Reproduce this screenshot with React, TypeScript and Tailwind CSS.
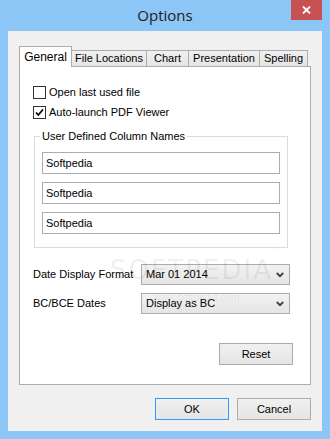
import React from 'react';

const ui = { fontFamily: '"Liberation Sans", Arial, sans-serif' };

const Checkbox: React.FC<{ checked?: boolean; label: string }> = ({ checked, label }) => (
  <div className="flex items-center h-[13px] gap-[3px]">
    <div className="w-[13px] h-[13px] border border-[#333333] bg-white flex items-center justify-center shrink-0">
      {checked && (
        <svg width="9" height="9" viewBox="0 0 9 9">
          <path d="M1 4.5 L3.3 7 L8 1.5" fill="none" stroke="#000" strokeWidth="1.8" />
        </svg>
      )}
    </div>
    <span className="text-[11px] text-black leading-none">{label}</span>
  </div>
);

const TextBox: React.FC<{ value: string }> = ({ value }) => (
  <div className="h-[22px] border border-[#abadb3] bg-white flex items-center pl-[3px] text-[11px] text-black">
    {value}
  </div>
);

const Select: React.FC<{ value: string }> = ({ value }) => (
  <div className="w-[149px] h-[21px] border border-[#acacac] bg-gradient-to-b from-[#f2f2f2] to-[#e5e5e5] flex items-center justify-between pl-[4px] pr-[5px] text-[11px] text-black">
    <span>{value}</span>
    <svg width="8" height="6" viewBox="0 0 8 6">
      <path d="M0.8 1 L4 4.2 L7.2 1" fill="none" stroke="#404040" strokeWidth="1.8" />
    </svg>
  </div>
);

const Button: React.FC<{ label: string; primary?: boolean }> = ({ label, primary }) => (
  <div
    className={`w-[74px] h-[22px] border flex items-center justify-center text-[11px] text-black bg-gradient-to-b from-[#f0f0f0] to-[#e5e5e5] ${
      primary ? 'border-[#3399ff]' : 'border-[#acacac]'
    }`}
  >
    {label}
  </div>
);

const tabs = [
  { label: 'File Locations', w: 'w-[75px]' },
  { label: 'Chart', w: 'w-[42px]' },
  { label: 'Presentation', w: 'w-[71px]' },
  { label: 'Spelling', w: 'w-[48px]' },
];

export default function App() {
  return (
    <div className="w-[330px] h-[439px] bg-[#8cc6f6] flex flex-col overflow-hidden" style={ui}>
      {/* title bar */}
      <div className="relative h-[31px] shrink-0 flex items-center justify-center">
        <span className="text-[15px] text-[#202020] mt-[-1px]" style={{ fontFamily: '"Open Sans", "Noto Sans", sans-serif' }}>
          Options
        </span>
        <div className="absolute top-0 right-[8px] w-[31px] h-[20px] bg-[#c75050] flex items-center justify-center">
          <svg width="9" height="8" viewBox="0 0 9 8">
            <path d="M1 0.5 L8 7.5 M8 0.5 L1 7.5" stroke="#fff" strokeWidth="1.8" />
          </svg>
        </div>
      </div>

      {/* client area */}
      <div className="mx-[8px] h-[400px] bg-[#f0f0f0] flex flex-col pt-[15px] pl-[11px] pr-[11px]">
        {/* tab strip */}
        <div className="flex items-end h-[20px]">
          <div className="relative z-10 w-[53px] h-[21px] mb-[-1px] bg-white border border-b-0 border-[#acacac] flex items-center justify-center text-[12px] text-black pb-[1px]">
            General
          </div>
          {tabs.map((t) => (
            <div
              key={t.label}
              className={`${t.w} h-[16px] border border-b-0 border-l-0 border-[#acacac] bg-gradient-to-b from-[#f0f0f0] to-[#e5e5e5] flex items-center justify-center text-[11px] text-black`}
            >
              {t.label}
            </div>
          ))}
        </div>

        {/* tab panel */}
        <div className="relative w-[292px] h-[319px] bg-white border border-[#acacac] flex flex-col pl-[13px]">
          <div className="mt-[19px] flex flex-col gap-[7px]">
            <Checkbox label="Open last used file" />
            <Checkbox checked label="Auto-launch PDF Viewer" />
          </div>

          <div className="relative mt-[17px] ml-[1px] w-[254px] border border-[#dcdcdc] pt-[15px] px-[7px] pb-[13px] flex flex-col gap-[8px]">
            <span className="absolute top-[-8px] left-[5px] bg-white px-[2px] text-[11px] leading-[14px] text-black">
              User Defined Column Names
            </span>
            <TextBox value="Softpedia" />
            <TextBox value="Softpedia" />
            <TextBox value="Softpedia" />
          </div>

          <div className="mt-[16px] flex flex-col gap-[8px]">
            <div className="flex items-center">
              <span className="w-[108px] text-[11px] text-black">Date Display Format</span>
              <Select value="Mar 01 2014" />
            </div>
            <div className="flex items-center">
              <span className="w-[108px] text-[11px] text-black">BC/BCE Dates</span>
              <Select value="Display as BC" />
            </div>
          </div>

          <div className="mt-[29px] flex justify-end pr-[17px]">
            <Button label="Reset" />
          </div>

          {/* watermark overlay */}
          <div className="absolute left-[90px] top-[190px] pointer-events-none flex flex-col items-center">
            <span className="text-[26px] tracking-[2px] text-black/[0.07] leading-none" style={{ fontFamily: '"DejaVu Sans", sans-serif' }}>
              SOFTPEDIA<sup className="text-[8px] align-top">™</sup>
            </span>
            <span className="mt-[10px] text-[10px] text-black/[0.08] leading-none">www.softpedia.com</span>
          </div>
        </div>

        {/* dialog buttons */}
        <div className="mt-[13px] flex justify-end gap-[8px]">
          <Button primary label="OK" />
          <Button label="Cancel" />
        </div>
      </div>
    </div>
  );
}
